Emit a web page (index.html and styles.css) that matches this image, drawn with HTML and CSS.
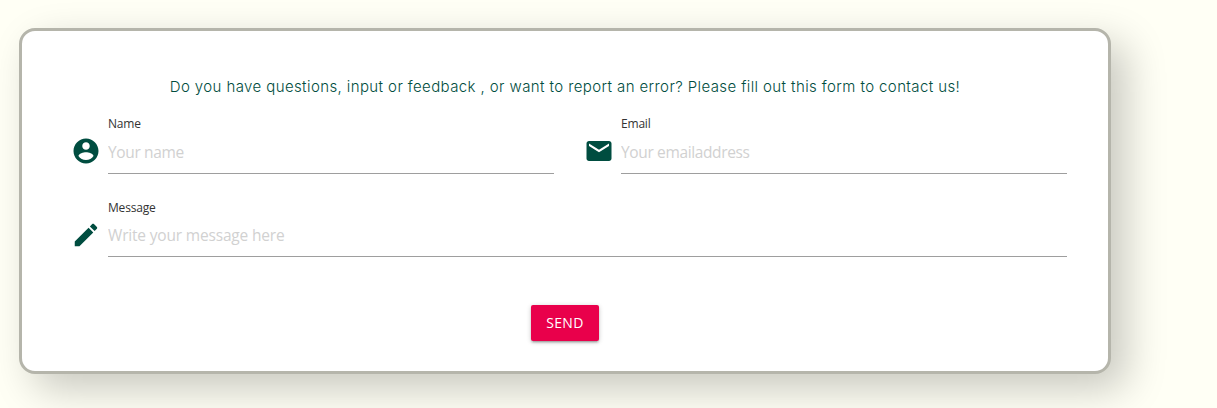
FILE: index.html
```html
<!DOCTYPE html>
<html lang="en">
<head>
<meta charset="utf-8">
<title>Contact</title>
<link rel="stylesheet" href="styles.css">
</head>
<body>
<form class="card">
  <p class="intro">Do you have questions, input or feedback , or want to report an error? Please fill out this form to contact us!</p>
  <div class="fields">
    <div class="field">
      <svg class="icon" viewBox="0 0 24 24"><path d="M12 2C6.48 2 2 6.48 2 12s4.48 10 10 10 10-4.48 10-10S17.52 2 12 2zm0 3c1.66 0 3 1.34 3 3s-1.34 3-3 3-3-1.34-3-3 1.34-3 3-3zm0 14.2c-2.5 0-4.71-1.28-6-3.22.03-1.99 4-3.08 6-3.08 1.99 0 5.97 1.09 6 3.08-1.29 1.94-3.5 3.22-6 3.22z"/></svg>
      <div class="control">
        <label class="label" for="name">Name</label>
        <input class="input" id="name" type="text" placeholder="Your name">
      </div>
    </div>
    <div class="field">
      <svg class="icon" viewBox="0 0 24 24"><path d="M20 4H4c-1.1 0-1.99.9-1.99 2L2 18c0 1.1.9 2 2 2h16c1.1 0 2-.9 2-2V6c0-1.1-.9-2-2-2zm0 4l-8 5-8-5V6l8 5 8-5v2z"/></svg>
      <div class="control">
        <label class="label" for="email">Email</label>
        <input class="input" id="email" type="text" placeholder="Your emailaddress">
      </div>
    </div>
    <div class="field field-wide">
      <svg class="icon" viewBox="0 0 24 24"><path d="M3 17.25V21h3.75L17.81 9.94l-3.75-3.75L3 17.25zM20.71 7.04c.39-.39.39-1.02 0-1.41l-2.34-2.34c-.39-.39-1.02-.39-1.41 0l-1.83 1.83 3.75 3.75 1.83-1.83z"/></svg>
      <div class="control">
        <label class="label" for="message">Message</label>
        <input class="input input-message" id="message" type="text" placeholder="Write your message here">
      </div>
    </div>
  </div>
  <button class="send" type="button">SEND</button>
</form>
</body>
</html>
```
FILE: styles.css
```css
* {
  box-sizing: border-box;
}

body {
  margin: 0;
  height: 408px;
  overflow: hidden;
  padding: 28px 106px 0 19px;
  background: #fffff5;
  font-family: "Open Sans", "Noto Sans", sans-serif;
}

.card {
  display: flex;
  flex-direction: column;
  align-items: center;
  width: 1092px;
  height: 346px;
  padding: 44px 41px 0 50px;
  border: 3px solid #b5b5ab;
  border-radius: 16px;
  background: #fff;
  box-shadow: 15px 15px 40px rgba(0, 0, 0, 0.22);
}

.intro {
  margin: 0 9px 0 0;
  height: 24px;
  font: 300 15px/24px Inter, sans-serif;
  letter-spacing: 0.4px;
  color: #004d40;
  white-space: nowrap;
}

.fields {
  display: grid;
  grid-template-columns: 482px 482px;
  column-gap: 31px;
  row-gap: 16px;
  width: 995px;
  margin-top: 16px;
}

.field {
  display: flex;
  gap: 7px;
  height: 68px;
}

.field-wide {
  grid-column: 1 / 3;
}

.icon {
  flex: none;
  width: 30px;
  height: 30px;
  margin: 21px 0 0 -1px;
  fill: #004d40;
}

.control {
  display: flex;
  flex: 1;
  flex-direction: column;
}

.label {
  height: 17px;
  font-size: 12px;
  line-height: 17px;
  letter-spacing: -0.2px;
  color: #333;
}

.input {
  width: 100%;
  height: 42px;
  padding: 0 0 2px;
  border: 0;
  border-bottom: 1px solid #9e9e9e;
  background: transparent;
  font: 15.5px "Open Sans", "Noto Sans", sans-serif;
  letter-spacing: -0.36px;
  outline: none;
}

.input-message {
  height: 41px;
  letter-spacing: -0.18px;
}

.input::placeholder {
  color: #d1d1d1;
  opacity: 1;
}

.send {
  width: 68px;
  height: 36px;
  margin: 38px 9px 0 0;
  padding: 0;
  border: 0;
  border-radius: 2px;
  background: #e9004b;
  box-shadow: 0 2px 2px rgba(0, 0, 0, 0.14), 0 3px 1px -2px rgba(0, 0, 0, 0.12), 0 1px 5px rgba(0, 0, 0, 0.2);
  color: #fff;
  font: 14px/36px "Open Sans", "Noto Sans", sans-serif;
  letter-spacing: 0.3px;
}
```
